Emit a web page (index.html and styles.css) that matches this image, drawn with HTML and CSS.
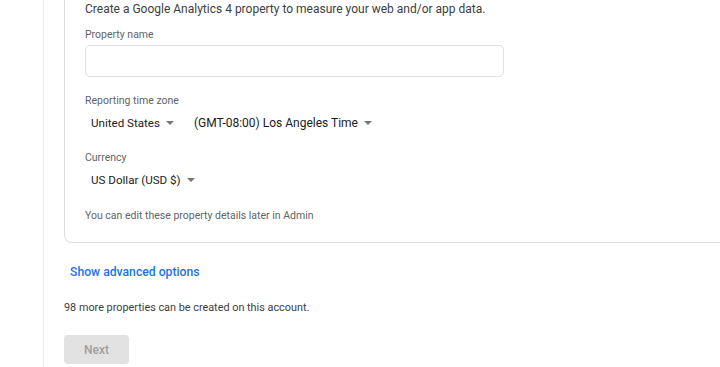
FILE: index.html
```html
<!DOCTYPE html>
<html lang="en">
<head>
    <meta charset="UTF-8">
    <meta name="viewport" content="width=device-width, initial-scale=1.0">
    <title>Create property</title>
    <link rel="stylesheet" href="styles.css">
</head>
<body>

    <div class="page">
        <div class="card">
            <p class="intro">Create a Google Analytics 4 property to measure your web and/or app data.</p>

            <label class="field-label first" for="propertyName">Property name</label>
            <input type="text" id="propertyName" class="text-input">

            <div class="field-label">Reporting time zone</div>
            <div class="select-row">
                <div class="select">United States <span class="arrow"></span></div>
                <div class="select">(GMT-08:00) Los Angeles Time <span class="arrow"></span></div>
            </div>

            <div class="field-label">Currency</div>
            <div class="select-row">
                <div class="select">US Dollar (USD $) <span class="arrow"></span></div>
            </div>

            <p class="hint">You can edit these property details later in Admin</p>
        </div>

        <a class="advanced" href="#">Show advanced options</a>

        <p class="quota">98 more properties can be created on this account.</p>

        <button class="next" disabled>Next</button>
    </div>

</body>
</html>
```

FILE: styles.css
```css
body {
    margin: 0;
    background: #fff;
    font-family: Roboto, "Noto Sans", sans-serif;
    color: #202124;
    overflow: hidden;
}

.page {
    margin-left: 43px;
    border-left: 1px solid #ececec;
    padding-left: 20px;
    height: 367px;
    display: flex;
    flex-direction: column;
    align-items: flex-start;
}

.card {
    width: 700px;
    border: 1px solid #dadce0;
    border-top: none;
    border-radius: 0 0 8px 8px;
    padding: 1px 0 18px 20px;
    box-sizing: border-box;
    display: flex;
    flex-direction: column;
    align-items: flex-start;
}

.intro {
    margin: 0;
    font-size: 12px;
    line-height: 17px;
    color: #3c4043;
}

.field-label {
    font-size: 10.5px;
    line-height: 16px;
    color: #5f6368;
    margin-top: 15px;
}

.field-label.first {
    margin-top: 9px;
}

.text-input {
    width: 419px;
    height: 32px;
    margin: 2px 0 1px;
    border: 1px solid #e0e0e0;
    border-radius: 5px;
    box-sizing: border-box;
    outline: none;
}

.select-row {
    display: flex;
    gap: 14px;
    margin-top: 2px;
}

.select {
    font-size: 12px;
    line-height: 24px;
    color: #202124;
    padding-left: 6px;
    display: flex;
    align-items: center;
}

.select:first-child {
    font-size: 11.6px;
}

.arrow {
    width: 0;
    height: 0;
    border-left: 4.5px solid transparent;
    border-right: 4.5px solid transparent;
    border-top: 4.5px solid #757575;
    margin-left: 6px;
}

.hint {
    margin: 16px 0 0;
    font-size: 10.5px;
    line-height: 16px;
    color: #5f6368;
}

.advanced {
    margin: 21px 0 0 6px;
    font-size: 12.2px;
    font-weight: 500;
    line-height: 16px;
    color: #1a73e8;
    text-decoration: none;
}

.quota {
    margin: 20px 0 0;
    font-size: 10.85px;
    line-height: 16px;
    color: #3c4043;
}

.next {
    margin-top: 19px;
    width: 65px;
    height: 29px;
    border: none;
    border-radius: 4px;
    background: #e2e2e2;
    color: #a0a0a0;
    font-family: Roboto, "Noto Sans", sans-serif;
    font-size: 12px;
    font-weight: 500;
}
```
